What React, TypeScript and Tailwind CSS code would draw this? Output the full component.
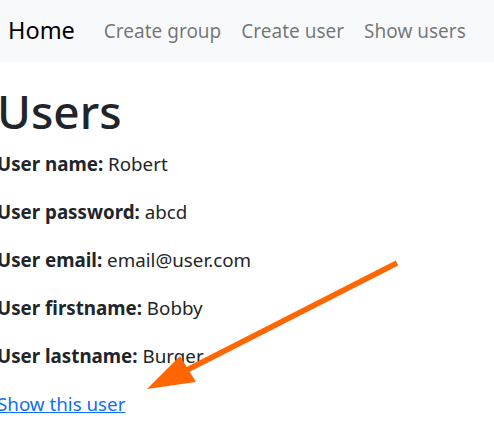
import React from "react";

export default function App() {
  const font = { fontFamily: '"Noto Sans", "Open Sans", sans-serif' };
  const rows: [string, string][] = [
    ["User name:", "Robert"],
    ["User password:", "abcd"],
    ["User email:", "email@user.com"],
    ["User firstname:", "Bobby"],
    ["User lastname:", "Burger"],
  ];
  return (
    <div className="relative w-[494px] h-[422px] overflow-hidden bg-white text-[#212529]" style={font}>
      <nav className="h-[62px] bg-[#f8f9fa] flex items-center pl-[8px]">
        <span className="text-[23.5px] text-black leading-none">Home</span>
        <div className="flex items-center gap-[20px] ml-[29px] text-[19px] text-black/55 leading-none">
          <span>Create group</span>
          <span>Create user</span>
          <span>Show users</span>
        </div>
      </nav>
      <main className="-ml-[3px] pt-[21px]">
        <h1 className="text-[46px] font-medium leading-[57.6px] mb-[9px]">Users</h1>
        {rows.map(([k, v]) => (
          <p key={k} className="text-[18.75px] leading-[28.8px] mb-[19.2px]">
            <b className="font-bold">{k}</b> {v}
          </p>
        ))}
        <a href="#" className="text-[18.75px] leading-[28.8px] text-[#0d6efd] underline">Show this user</a>
      </main>
      <svg className="absolute inset-0 pointer-events-none" width="494" height="422" viewBox="0 0 494 422">
        <line x1="397" y1="263" x2="185" y2="371" stroke="#ff6600" strokeWidth="5.5" strokeLinecap="butt" />
        <polygon points="147,389 180,356 196,382" fill="#ff6600" />
      </svg>
    </div>
  );
}
